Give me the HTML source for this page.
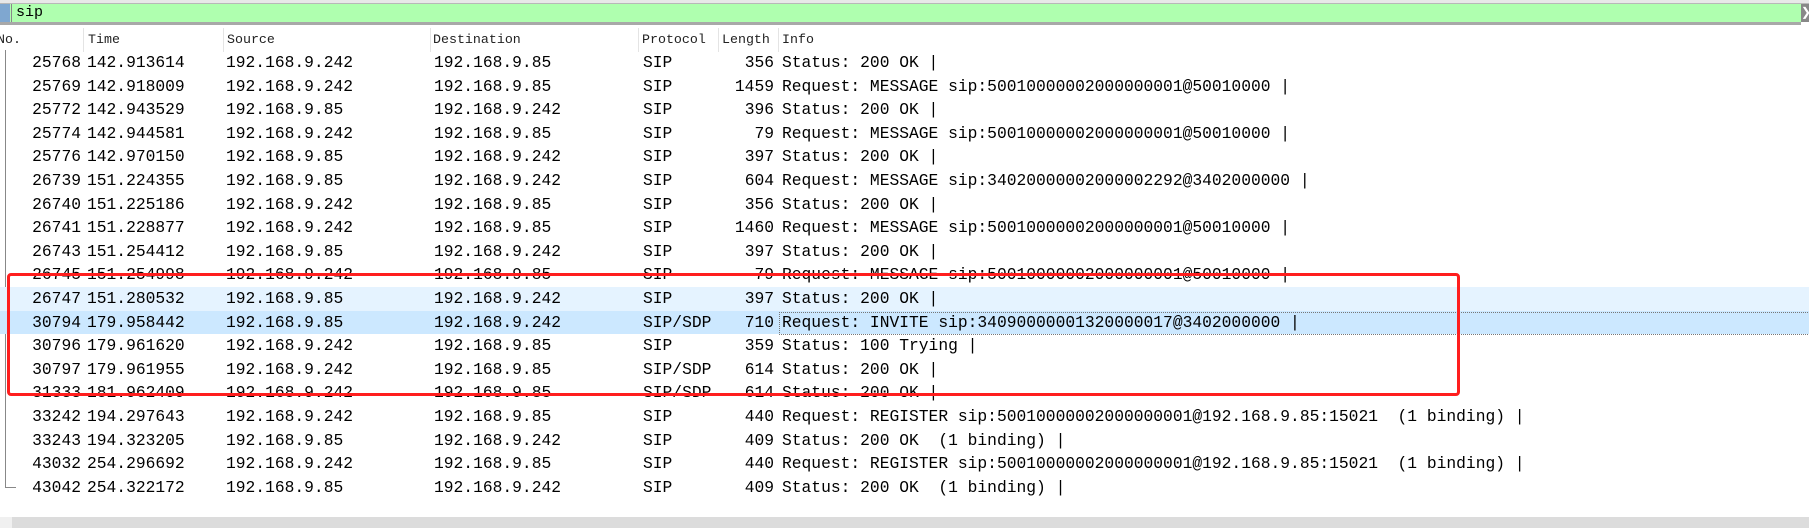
<!DOCTYPE html>
<html><head><meta charset="utf-8">
<style>
html,body{margin:0;padding:0;width:1809px;height:528px;overflow:hidden;background:#fff;position:relative;font-family:"Liberation Mono",monospace;}
.top{position:absolute;left:0;top:0;width:1809px;height:4px;background:#e8e8e8;border-bottom:1px solid #b8b8b8;box-sizing:border-box;}
.filt{position:absolute;left:0;top:4px;width:1801px;height:18px;background:#afffaf;border-bottom:3px solid #a8a8a8;}
.ico{position:absolute;left:0;top:4px;width:10px;height:18px;background:#7fa7d0;}
.sep{position:absolute;left:11px;top:4px;width:1px;height:18px;background:#888;}
.ftxt{position:absolute;left:16px;top:4px;font-size:15px;line-height:18px;color:#000;}
.x{position:absolute;left:1801px;top:4px;width:8px;height:18px;background:#888;color:#fff;font-size:12px;line-height:18px;}
.hdr{position:absolute;top:28px;height:24px;font-size:13.3px;line-height:24px;color:#222;}
.hs{position:absolute;top:28px;width:1px;height:24px;background:#e4e4e4;}
.row{position:absolute;left:0;width:1809px;height:23.6px;font-size:16.3px;line-height:23.6px;color:#000;white-space:pre;}
.row span{position:absolute;top:0;}
.n{right:calc(1809px - 81px);text-align:right;}
.l{right:calc(1809px - 774px);text-align:right;}
.t{left:87px}.s{left:226px}.d{left:434px}.p{left:643px}.i{left:782px}
.tree{position:absolute;left:5px;top:50px;width:10px;height:437px;border-left:1px solid #888;border-bottom:1px solid #888;}
.red{position:absolute;left:7px;top:273px;width:1447px;height:117px;border:3px solid #ff1e1e;border-radius:4px;}
.sb{position:absolute;left:0;top:517px;width:1809px;height:11px;background:#dcdcdc;}
.sb2{position:absolute;left:0;top:517px;width:12px;height:11px;background:#f0f0f0;}
.dot{position:absolute;left:779px;top:1px;width:1029px;height:21px;border:1px dotted #777;}
</style></head><body>
<div class="top"></div>
<div class="filt"></div>
<div class="ico"></div><div class="sep"></div>
<div class="ftxt">sip</div>
<div class="x">&#x276F;</div>

<div class="hdr" style="left:-3px">No.</div>
<div class="hs" style="left:83px"></div>
<div class="hdr" style="left:88px">Time</div>
<div class="hs" style="left:223px"></div>
<div class="hdr" style="left:227px">Source</div>
<div class="hs" style="left:430px"></div>
<div class="hdr" style="left:433px">Destination</div>
<div class="hs" style="left:638px"></div>
<div class="hdr" style="left:642px">Protocol</div>
<div class="hs" style="left:718px"></div>
<div class="hdr" style="left:722px">Length</div>
<div class="hs" style="left:778px"></div>
<div class="hdr" style="left:782px">Info</div>

<div class="tree"></div>

<div class="row" style="top:51px"><span class="n">25768</span><span class="t">142.913614</span><span class="s">192.168.9.242</span><span class="d">192.168.9.85</span><span class="p">SIP</span><span class="l">356</span><span class="i">Status: 200 OK |</span></div>
<div class="row" style="top:74.6px"><span class="n">25769</span><span class="t">142.918009</span><span class="s">192.168.9.242</span><span class="d">192.168.9.85</span><span class="p">SIP</span><span class="l">1459</span><span class="i">Request: MESSAGE sip:50010000002000000001@50010000 |</span></div>
<div class="row" style="top:98.2px"><span class="n">25772</span><span class="t">142.943529</span><span class="s">192.168.9.85</span><span class="d">192.168.9.242</span><span class="p">SIP</span><span class="l">396</span><span class="i">Status: 200 OK |</span></div>
<div class="row" style="top:121.8px"><span class="n">25774</span><span class="t">142.944581</span><span class="s">192.168.9.242</span><span class="d">192.168.9.85</span><span class="p">SIP</span><span class="l">79</span><span class="i">Request: MESSAGE sip:50010000002000000001@50010000 |</span></div>
<div class="row" style="top:145.4px"><span class="n">25776</span><span class="t">142.970150</span><span class="s">192.168.9.85</span><span class="d">192.168.9.242</span><span class="p">SIP</span><span class="l">397</span><span class="i">Status: 200 OK |</span></div>
<div class="row" style="top:169px"><span class="n">26739</span><span class="t">151.224355</span><span class="s">192.168.9.85</span><span class="d">192.168.9.242</span><span class="p">SIP</span><span class="l">604</span><span class="i">Request: MESSAGE sip:34020000002000002292@3402000000 |</span></div>
<div class="row" style="top:192.6px"><span class="n">26740</span><span class="t">151.225186</span><span class="s">192.168.9.242</span><span class="d">192.168.9.85</span><span class="p">SIP</span><span class="l">356</span><span class="i">Status: 200 OK |</span></div>
<div class="row" style="top:216.2px"><span class="n">26741</span><span class="t">151.228877</span><span class="s">192.168.9.242</span><span class="d">192.168.9.85</span><span class="p">SIP</span><span class="l">1460</span><span class="i">Request: MESSAGE sip:50010000002000000001@50010000 |</span></div>
<div class="row" style="top:239.8px"><span class="n">26743</span><span class="t">151.254412</span><span class="s">192.168.9.85</span><span class="d">192.168.9.242</span><span class="p">SIP</span><span class="l">397</span><span class="i">Status: 200 OK |</span></div>
<div class="row" style="top:263.4px"><span class="n">26745</span><span class="t">151.254998</span><span class="s">192.168.9.242</span><span class="d">192.168.9.85</span><span class="p">SIP</span><span class="l">79</span><span class="i">Request: MESSAGE sip:50010000002000000001@50010000 |</span></div>
<div class="row" style="top:287px;background:#e5f3ff"><span class="n">26747</span><span class="t">151.280532</span><span class="s">192.168.9.85</span><span class="d">192.168.9.242</span><span class="p">SIP</span><span class="l">397</span><span class="i">Status: 200 OK |</span></div>
<div class="row" style="top:310.6px;background:#cce8ff"><div class="dot"></div><span class="n">30794</span><span class="t">179.958442</span><span class="s">192.168.9.85</span><span class="d">192.168.9.242</span><span class="p">SIP/SDP</span><span class="l">710</span><span class="i">Request: INVITE sip:34090000001320000017@3402000000 |</span></div>
<div class="row" style="top:334.2px"><span class="n">30796</span><span class="t">179.961620</span><span class="s">192.168.9.242</span><span class="d">192.168.9.85</span><span class="p">SIP</span><span class="l">359</span><span class="i">Status: 100 Trying |</span></div>
<div class="row" style="top:357.8px"><span class="n">30797</span><span class="t">179.961955</span><span class="s">192.168.9.242</span><span class="d">192.168.9.85</span><span class="p">SIP/SDP</span><span class="l">614</span><span class="i">Status: 200 OK |</span></div>
<div class="row" style="top:381.4px"><span class="n">31333</span><span class="t">181.962409</span><span class="s">192.168.9.242</span><span class="d">192.168.9.85</span><span class="p">SIP/SDP</span><span class="l">614</span><span class="i">Status: 200 OK |</span></div>
<div class="row" style="top:405px"><span class="n">33242</span><span class="t">194.297643</span><span class="s">192.168.9.242</span><span class="d">192.168.9.85</span><span class="p">SIP</span><span class="l">440</span><span class="i">Request: REGISTER sip:50010000002000000001@192.168.9.85:15021  (1 binding) |</span></div>
<div class="row" style="top:428.6px"><span class="n">33243</span><span class="t">194.323205</span><span class="s">192.168.9.85</span><span class="d">192.168.9.242</span><span class="p">SIP</span><span class="l">409</span><span class="i">Status: 200 OK  (1 binding) |</span></div>
<div class="row" style="top:452.2px"><span class="n">43032</span><span class="t">254.296692</span><span class="s">192.168.9.242</span><span class="d">192.168.9.85</span><span class="p">SIP</span><span class="l">440</span><span class="i">Request: REGISTER sip:50010000002000000001@192.168.9.85:15021  (1 binding) |</span></div>
<div class="row" style="top:475.8px"><span class="n">43042</span><span class="t">254.322172</span><span class="s">192.168.9.85</span><span class="d">192.168.9.242</span><span class="p">SIP</span><span class="l">409</span><span class="i">Status: 200 OK  (1 binding) |</span></div>

<div class="red"></div>
<div class="sb"></div><div class="sb2"></div>
</body></html>
